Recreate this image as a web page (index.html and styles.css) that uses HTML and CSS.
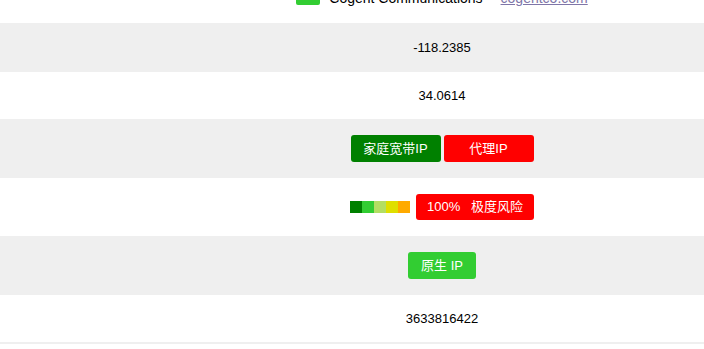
FILE: index.html
```html
<!DOCTYPE html>
<html lang="zh">
<head>
    <meta charset="UTF-8">
    <meta name="viewport" content="width=device-width, initial-scale=1.0">
    <title>IP 信息</title>
    <link rel="stylesheet" href="styles.css">
</head>
<body>
    <div class="info_table">
        <div class="row text_row">
            <div class="label"></div>
            <div class="value isp">
                <span class="isp_tag"></span>
                <span>Cogent Communications</span>
                <a class="isp_link" href="#">cogentco.com</a>
            </div>
        </div>
        <div class="row text_row">
            <div class="label"></div>
            <div class="value">-118.2385</div>
        </div>
        <div class="row text_row short">
            <div class="label"></div>
            <div class="value">34.0614</div>
        </div>
        <div class="row badge_row">
            <div class="label"></div>
            <div class="value">
                <span class="badge wide green">家庭宽带IP</span>
                <span class="badge wide red">代理IP</span>
            </div>
        </div>
        <div class="row badge_row short">
            <div class="label"></div>
            <div class="value risk">
                <span class="risk_bar">
                    <span class="seg s1"></span><span class="seg s2"></span><span class="seg s3"></span><span class="seg s4"></span><span class="seg s5"></span>
                </span>
                <span class="badge red risk_badge">100%&nbsp;&nbsp;&nbsp;极度风险</span>
            </div>
        </div>
        <div class="row badge_row">
            <div class="label"></div>
            <div class="value">
                <span class="badge lime">原生 IP</span>
            </div>
        </div>
        <div class="row text_row short">
            <div class="label"></div>
            <div class="value">3633816422</div>
        </div>
    </div>
</body>
</html>
```

FILE: styles.css
```css
body {
    font-family: "Liberation Sans", "Noto Sans CJK SC", sans-serif;
    font-size: 13px;
    color: #000;
    margin: 0;
    padding: 0;
}

/* page is scrolled a bit, first row is half hidden */
.info_table {
    margin-top: -26px;
    border-bottom: 2px solid #efefef;
}

.row {
    display: grid;
    grid-template-columns: 180px 1fr;
    align-items: center;
}

.row:nth-child(even) {
    background-color: #efefef;
}

.text_row {
    height: 49px;
}
.text_row.short {
    height: 47px;
}
.badge_row {
    height: 59px;
}
.badge_row.short {
    height: 58px;
}

.value {
    display: flex;
    justify-content: center;
    align-items: center;
    gap: 3px;
    line-height: 15px;
}

.isp {
    font-size: 14px;
    gap: 9px;
}

.isp_tag {
    display: inline-block;
    width: 24px;
    height: 12px;
    background-color: #32cd32;
    border-radius: 2px;
}

.isp_link {
    color: #7f76a8;
    margin-left: 9px;
}

.badge {
    display: inline-block;
    color: white;
    height: 27px;
    line-height: 27px;
    padding: 0 13px;
    border-radius: 3px;
    text-align: center;
}

.badge.wide {
    width: 90px;
    padding: 0;
}

.green { background-color: #008000; }
.red { background-color: #ff0000; }
.lime { background-color: #32cd32; }

.risk {
    gap: 6px;
}

.risk_bar {
    display: flex;
}

.seg {
    width: 12px;
    height: 12px;
}
.s1 { background-color: #008000; }
.s2 { background-color: #32cd32; }
.s3 { background-color: #b3de63; }
.s4 { background-color: #dfdf00; }
.s5 { background-color: #ffaa00; }

.risk_badge {
    height: 26px;
    line-height: 26px;
    padding: 0 11px;
}
```
